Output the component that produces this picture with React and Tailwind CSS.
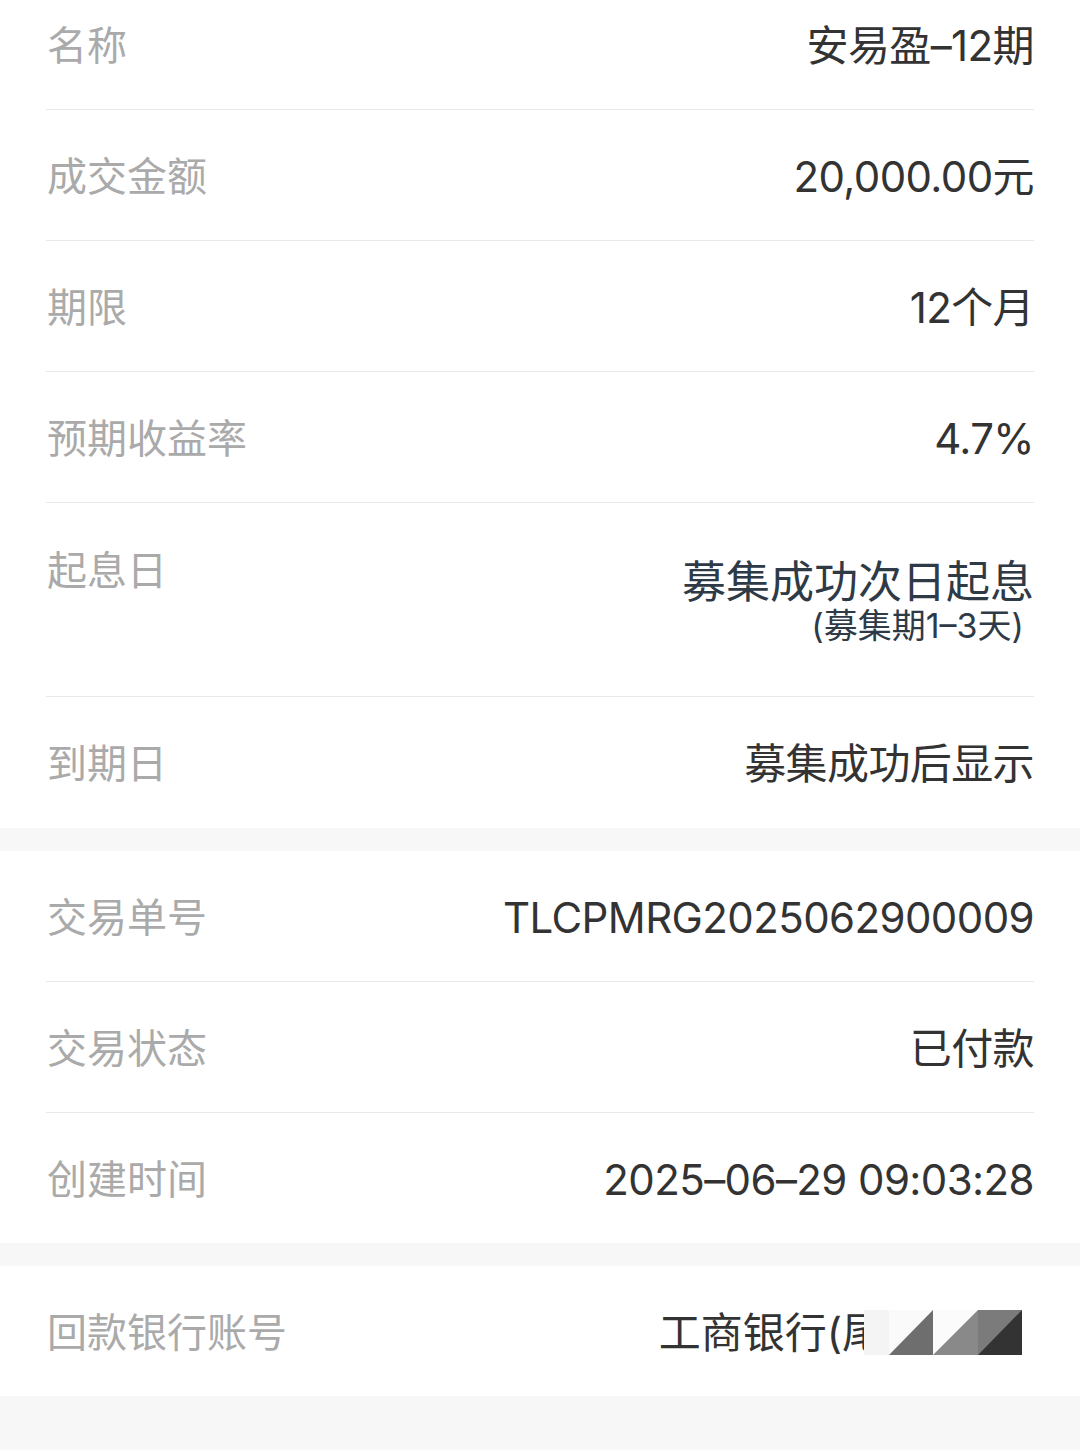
import React from 'react';

const font = { fontFamily: 'Inter, "Noto Sans CJK SC", sans-serif' };

const Row = ({ label, value, last, className = '' }) => (
    <div className={`flex items-center justify-between mx-[46px] pt-[3px] ${last ? '' : 'border-b border-[#e9e9e9]'} ${className}`}>
        <span className="text-[40px] text-[#aaaaaa] leading-none pl-[1px]">{label}</span>
        <span className="text-[42px] text-[#333333] leading-none tracking-[-0.6px]">{value}</span>
    </div>
);

const Mosaic = () => (
    <svg width="158" height="45" viewBox="0 0 158 45" className="block">
        <rect x="0" y="0" width="25" height="45" fill="#f4f4f4" />
        <rect x="25" y="0" width="44" height="45" fill="#fafafa" />
        <polygon points="69,0 69,45 25,45" fill="#6e6e6e" />
        <rect x="69" y="0" width="45" height="45" fill="#fbfbfb" />
        <polygon points="114,0 114,45 69,45" fill="#898989" />
        <rect x="114" y="0" width="44" height="45" fill="#7b7b7b" />
        <polygon points="158,0 158,45 114,45" fill="#333333" />
    </svg>
);

const App = () => {
    return (
        <div className="w-[1080px] min-h-[1450px] bg-[#f7f7f7]" style={font}>
            <div className="bg-white">
                <Row label="名称" value="安易盈–12期" className="h-[110px] pb-[21px]" />
                <Row label="成交金额" value="20,000.00元" className="h-[131px]" />
                <Row label="期限" value="12个月" className="h-[131px]" />
                <Row label="预期收益率" value="4.7%" className="h-[131px]" />

                <div className="flex justify-between mx-[46px] h-[194px] border-b border-[#e9e9e9] pt-[48px]">
                    <span className="text-[40px] text-[#aaaaaa] leading-none pl-[1px]">起息日</span>
                    <div className="flex flex-col items-end pt-[9px]">
                        <span className="text-[44px] text-[#2f3a47] leading-none">募集成功次日起息</span>
                        <span className="text-[34px] text-[#2f3a47] leading-none mt-[5px] pr-[10px]">(募集期1–3天)</span>
                    </div>
                </div>

                <Row label="到期日" value="募集成功后显示" last className="h-[131px]" />
            </div>

            <div className="h-[23px]" />

            <div className="bg-white">
                <Row label="交易单号" value="TLCPMRG2025062900009" className="h-[131px]" />
                <Row label="交易状态" value="已付款" className="h-[131px]" />
                <Row label="创建时间" value="2025–06–29 09:03:28" last className="h-[130px]" />
            </div>

            <div className="h-[23px]" />

            <div className="bg-white">
                <div className="flex items-center justify-between mx-[46px] h-[130px] pt-[3px]">
                    <span className="text-[40px] text-[#aaaaaa] leading-none pl-[1px]">回款银行账号</span>
                    <div className="flex items-center">
                        <span className="text-[42px] text-[#333333] leading-none">工商银行(</span>
                        <span className="inline-block w-[22px] overflow-hidden whitespace-nowrap text-[42px] text-[#333333] leading-none">尾</span>
                        <Mosaic />
                        <span className="w-[12px]" />
                    </div>
                </div>
            </div>
        </div>
    );
};

export default App;
